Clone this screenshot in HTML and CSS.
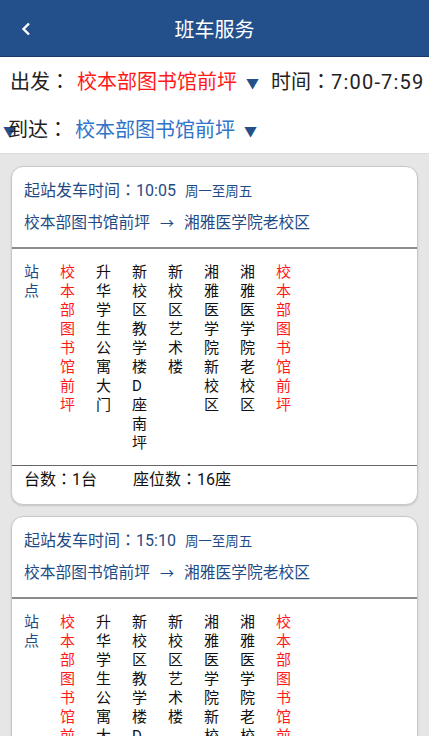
FILE: index.html
```html
<!DOCTYPE html>
<html>
<head>
  <meta charset="utf-8">
  <title>班车服务</title>
  <link rel="stylesheet" href="styles.css">
</head>
<body>
  <div class="topbar">
    <svg class="back" width="10" height="14" viewBox="0 0 10 14"><path d="M8 1.5 L2.5 7 L8 12.5" fill="none" stroke="#fff" stroke-width="2.4"/></svg>
    <div class="topbar-title">班车服务</div>
  </div>

  <div class="filters">
    <div class="filter-row">
      <span class="label">出发<span class="colon">：</span></span><span class="from">校本部图书馆前坪</span><span class="tri">▼</span><span class="time">时间<span class="colon">：</span><span class="hours">7:00-7:59</span></span>
    </div>
    <div class="filter-row">
      <span class="tri tri-wrap">▼</span><span class="label">到达<span class="colon">：</span></span><span class="to">校本部图书馆前坪</span><span class="tri">▼</span>
    </div>
  </div>

  <div class="list">
    <div class="card">
      <div class="card-head">
        <div class="depart">起站发车时间<span class="colon">：</span>10:05<span class="days">周一至周五</span></div>
        <div class="route">校本部图书馆前坪<span class="arrow">→</span>湘雅医学院老校区</div>
      </div>
      <div class="stops">
        <div class="stop title">站点</div>
        <div class="stop red">校本部图书馆前坪</div>
        <div class="stop">升华学生公寓大门</div>
        <div class="stop">新校区教学楼D座南坪</div>
        <div class="stop">新校区艺术楼</div>
        <div class="stop">湘雅医学院新校区</div>
        <div class="stop">湘雅医学院老校区</div>
        <div class="stop red">校本部图书馆前坪</div>
      </div>
      <div class="card-foot">
        <span class="count">台数<span class="colon">：</span>1台</span><span>座位数<span class="colon">：</span>16座</span>
      </div>
    </div>

    <div class="card">
      <div class="card-head">
        <div class="depart">起站发车时间<span class="colon">：</span>15:10<span class="days">周一至周五</span></div>
        <div class="route">校本部图书馆前坪<span class="arrow">→</span>湘雅医学院老校区</div>
      </div>
      <div class="stops">
        <div class="stop title">站点</div>
        <div class="stop red">校本部图书馆前坪</div>
        <div class="stop">升华学生公寓大门</div>
        <div class="stop">新校区教学楼D座南坪</div>
        <div class="stop">新校区艺术楼</div>
        <div class="stop">湘雅医学院新校区</div>
        <div class="stop">湘雅医学院老校区</div>
        <div class="stop red">校本部图书馆前坪</div>
      </div>
      <div class="card-foot">
        <span class="count">台数<span class="colon">：</span>1台</span><span>座位数<span class="colon">：</span>16座</span>
      </div>
    </div>
  </div>
</body>
</html>
```

FILE: styles.css
```css
body {
  margin: 0;
  background-color: #e6e6e6;
  font-family: "Roboto", "Noto Sans CJK SC", sans-serif;
  text-spacing-trim: space-all;
  overflow: hidden;
}

/* centred full-width colon, as on the device */
.colon {
  font-family: "Noto Sans CJK JP", sans-serif;
}

.topbar {
  height: 56px;
  background-color: #234f8b;
  border-bottom: 1px solid #163a6a;
  display: flex;
  align-items: center;
  justify-content: center;
  position: relative;
}

.back {
  position: absolute;
  left: 21px;
  top: 22px;
}

.topbar-title {
  color: #fff;
  font-size: 20px;
}

.filters {
  background-color: #fff;
  border-bottom: 1px solid #dcdcdc;
}

.filter-row {
  height: 48px;
  line-height: 48px;
  font-size: 20px;
  white-space: nowrap;
  padding-left: 10px;
  color: #222;
}

.label {
  margin-right: 7px;
}

.hours {
  letter-spacing: 1.2px;
}

.from {
  color: #ff1a1a;
}

.to {
  color: #2f74c8;
}

.tri {
  color: #234f8b;
  font-size: 13px;
  margin: 0 12px 0 9px;
  vertical-align: 1px;
}

.tri-wrap {
  margin: 0 -8px 0 -7px;
}

.list {
  padding: 12px 11px;
}

.card {
  background-color: #fff;
  border: 1px solid #c8c8c8;
  border-radius: 12px;
  box-shadow: 0 1px 2px rgba(0, 0, 0, 0.15);
  margin-bottom: 11px;
  overflow: hidden;
}

.card-head {
  padding: 11px 12px 0 12px;
  color: #1f4b85;
  border-bottom: 2px solid #8c8c8c;
}

.depart {
  font-size: 16px;
  height: 23px;
  line-height: 23px;
}

.days {
  font-size: 13.5px;
  margin-left: 9px;
}

.route {
  font-size: 15.75px;
  height: 46px;
  line-height: 44px;
}

.arrow {
  margin: 0 10px;
  font-size: 14px;
}

.stops {
  display: flex;
  padding: 14px 12px 12px 12px;
  min-height: 186px;
}

.stop {
  width: 21px;
  margin-right: 15px;
  font-size: 15px;
  line-height: 19px;
  color: #111;
  word-break: break-all;
}

.stop.title {
  color: #1f4b85;
}

.stop.red {
  color: #ff1a1a;
}

.card-foot {
  border-top: 1px solid #666;
  padding: 0 12px;
  height: 38px;
  line-height: 24px;
  font-size: 16px;
  color: #111;
}

.count {
  display: inline-block;
  width: 109px;
}
```
